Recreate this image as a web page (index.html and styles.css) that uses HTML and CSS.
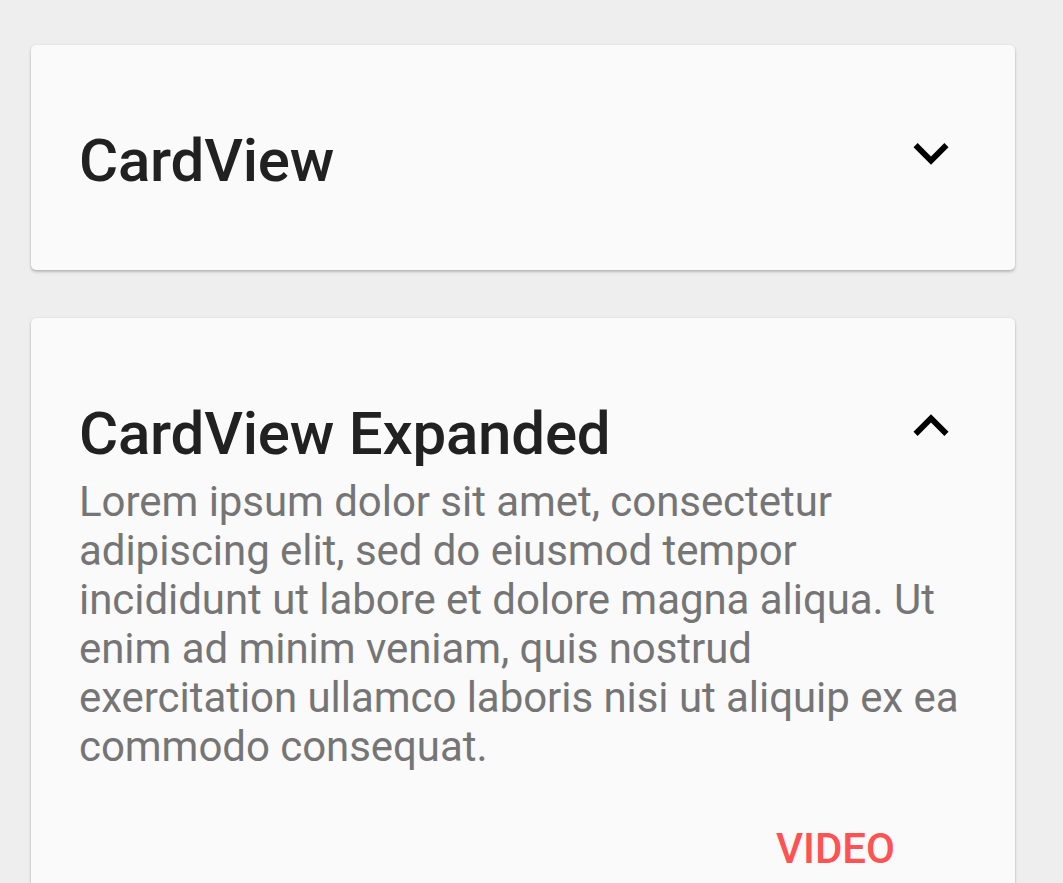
FILE: index.html
```html
<!DOCTYPE html>
<html>
<head>
<meta charset="utf-8">
<link rel="stylesheet" href="styles.css">
</head>
<body>
<div class="list">
  <div class="card">
    <div class="card-header">
      <h2 class="card-title">CardView</h2>
      <svg class="chevron" viewBox="0 0 24 24"><path d="M16.59 8.59L12 13.17 7.41 8.59 6 10l6 6 6-6z"/></svg>
    </div>
  </div>
  <div class="card card-expanded">
    <div class="card-header">
      <h2 class="card-title">CardView Expanded</h2>
      <svg class="chevron" viewBox="0 0 24 24"><path d="M12 8l-6 6 1.41 1.41L12 10.83l4.59 4.58L18 14z"/></svg>
    </div>
    <p class="card-body">Lorem ipsum dolor sit amet, consectetur adipiscing elit, sed do eiusmod tempor incididunt ut labore et dolore magna aliqua. Ut enim ad minim veniam, quis nostrud exercitation ullamco laboris nisi ut aliquip ex ea commodo consequat.</p>
    <div class="card-actions">
      <span class="action">VIDEO</span>
    </div>
  </div>
</div>
</body>
</html>
```
FILE: styles.css
```css
html, body {
  margin: 0;
  padding: 0;
  background: #eeeeee;
  font-family: Roboto, "Noto Sans", sans-serif;
}
.list {
  display: flex;
  flex-direction: column;
  gap: 48px;
  padding: 45px 48px 0 31px;
}
.card {
  background: #fafafa;
  border-radius: 5px;
  box-shadow: 0 2px 3px rgba(0,0,0,0.22), 0 0 2px rgba(0,0,0,0.10);
  padding: 73px 46px 74px 48px;
}
.card-header {
  display: flex;
  align-items: flex-start;
  justify-content: space-between;
}
.card-title {
  margin: 8px 0 0 0;
  font-size: 60px;
  line-height: 70px;
  font-weight: 500;
  letter-spacing: -0.2px;
  color: #212121;
}
.chevron {
  width: 70px;
  height: 70px;
  fill: #000;
  flex: none;
  margin-right: 3px;
}
.card-body {
  margin: 8px 0 0 0;
  font-size: 42px;
  line-height: 49px;
  letter-spacing: -0.05px;
  color: #757575;
}
.card-actions {
  display: flex;
  justify-content: flex-end;
  padding-right: 74px;
  margin-top: 53px;
}
.action {
  font-size: 42px;
  line-height: 50px;
  font-weight: 500;
  color: #ff5252;
}
```
